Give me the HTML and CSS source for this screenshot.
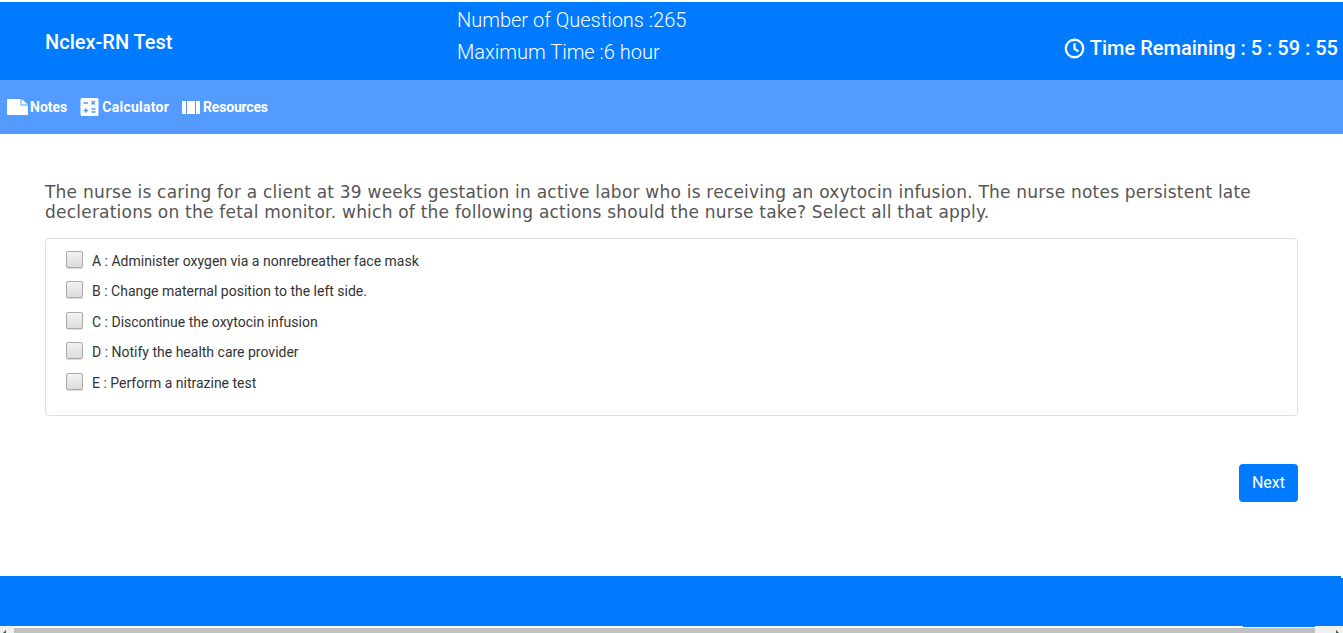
FILE: index.html
```html
<!DOCTYPE html>
<html lang="en">
<head>
<meta charset="utf-8">
<title>Nclex-RN Test</title>
<link rel="stylesheet" href="styles.css">
</head>
<body>
<div class="page">
  <header class="topbar">
    <div class="test-name">Nclex-RN Test</div>
    <div class="test-meta">
      <div>Number of Questions :265</div>
      <div>Maximum Time :6 hour</div>
    </div>
    <div class="timer">
      <svg class="clock" viewBox="0 0 24 24" fill="none" stroke="#fff" stroke-width="2.600"><circle cx="12" cy="12" r="10"/><path d="M12 6v6.500l4.500 2.700"/></svg>
      <span>Time Remaining : 5 : 59 : 55</span>
    </div>
  </header>
  <nav class="toolbar">
    <a class="tool tool-notes">
      <svg class="ic-note" viewBox="0 0 21 16"><path fill="#fff" d="M1 0h12.500v5.500a1 1 0 0 0 1 1H21V15a1 1 0 0 1-1 1H1a1 1 0 0 1-1-1V1a1 1 0 0 1 1-1z"/><path fill="#fff" d="M14.500 0L21 5.500h-6.500z"/></svg>
      <span>Notes</span>
    </a>
    <a class="tool tool-calc">
      <svg class="ic-calc" viewBox="0 0 18 18"><rect width="18" height="18" rx="1.500" fill="#fff"/><path stroke="#549bff" stroke-width="1.400" fill="none" d="M3 5h4.500M11 3l3.500 3.500M14.500 3L11 6.500M3 12.500h4.500M5.250 10.200v4.600M11 11h4M11 14h4"/></svg>
      <span>Calculator</span>
    </a>
    <a class="tool tool-res">
      <svg class="ic-res" viewBox="0 0 18 13"><path fill="#fff" d="M0 0h4v13H0zM5 0h8v13H5zM14 0h4v13h-4z"/></svg>
      <span>Resources</span>
    </a>
  </nav>
  <main class="content">
    <p class="question">The nurse is caring for a client at 39 weeks gestation in active labor who is receiving an oxytocin infusion. The nurse notes persistent late declerations on the fetal monitor. which of the following actions should the nurse take? Select all that apply.</p>
    <section class="options">
      <label class="option"><span class="box"></span>A : Administer oxygen via a nonrebreather face mask</label>
      <label class="option"><span class="box"></span>B : Change maternal position to the left side.</label>
      <label class="option"><span class="box"></span>C : Discontinue the oxytocin infusion</label>
      <label class="option"><span class="box"></span>D : Notify the health care provider</label>
      <label class="option"><span class="box"></span>E : Perform a nitrazine test</label>
    </section>
    <div class="actions"><button class="next">Next</button></div>
  </main>
  <footer class="footer"></footer>
  <div class="hscroll"><span class="arrow left"></span><span class="thumb"></span><span class="arrow right"></span></div>
</div>
</body>
</html>
```
FILE: styles.css
```css
* { box-sizing: border-box; }
html, body { margin: 0; padding: 0; height: 100%; overflow: hidden; background: #fff; }
body { font-family: Roboto, "Liberation Sans", sans-serif; }
.page { width: 1343px; height: 633px; display: flex; flex-direction: column; padding-top: 2px; }
.topbar { height: 78px; background: #007bff; color: #fff; display: flex; flex: none; }
.test-name { width: 457px; padding: 28px 0 0 45px; font-size: 20px; font-weight: 500; line-height: 24px; }
.test-meta { flex: 1; padding-top: 2px; font-size: 20px; font-weight: 300; line-height: 32px; }
.timer { display: flex; align-items: center; gap: 5px; padding: 0 5px 0 0; margin-top: 23px; height: 46px; font-size: 20px; font-weight: 500; }
.clock { width: 21px; height: 21px; }
.toolbar { height: 54px; flex: none; background: #549bff; display: flex; align-items: center; padding: 0 0 0 7px; gap: 13px; color: #fff; font-size: 14px; font-weight: 700; }
.tool { display: flex; align-items: center; gap: 2px; }
.tool-calc { gap: 3px; letter-spacing: 0.25px; }
.tool-res { gap: 3px; letter-spacing: -0.2px; }
.ic-note { width: 21px; height: 16px; }
.ic-calc { width: 19px; height: 18px; }
.ic-res { width: 18px; height: 13px; }
.content { flex: 1; padding: 48px 45px 0; }
.question { margin: 0 0 16px; font-family: "DejaVu Sans", sans-serif; font-size: 17px; line-height: 20px; letter-spacing: 0.22px; color: #555; }
.options { height: 178px; border: 1px solid #dfdfdf; border-radius: 4px; padding: 6.250px 20px 0; }
.option { display: flex; align-items: center; height: 30.500px; font-size: 14px; color: #333; }
.box { width: 17px; height: 17px; margin: -3px 9px 0 0; border: 1px solid #aaa; border-radius: 2px; background: linear-gradient(#f2f2f2, #dcdcdc); box-shadow: 0 1px 1px rgba(0,0,0,.15); }
.actions { display: flex; justify-content: flex-end; margin-top: 48px; }
.next { width: 59px; height: 38px; padding: 0 0 2px; border: 0; border-radius: 4px; background: #007bff; color: #fff; font: 400 16px Roboto, sans-serif; }
.footer { position: relative; height: 50px; flex: none; background: #007bff; }
.footer::before { content: ""; position: absolute; top: 0; right: 0; width: 2px; height: 2px; background: #fff; }
.footer::after { content: ""; position: absolute; bottom: -1px; right: 2px; width: 98px; height: 1px; background: #007bff; }
.hscroll { height: 7px; flex: none; display: flex; background: #fff; }
.arrow { position: relative; width: 14px; background: #f1f1f1; }
.arrow.right { flex: 1; }
.arrow::after { content: ""; position: absolute; bottom: -3px; border-top: 3px solid transparent; border-bottom: 3px solid transparent; }
.arrow.left::after { left: 3px; border-right: 3px solid #505050; }
.arrow.right::after { right: 4px; border-left: 3px solid #505050; }
.thumb { width: 1301px; margin-top: 2px; background: #c1c1c1; }
```
